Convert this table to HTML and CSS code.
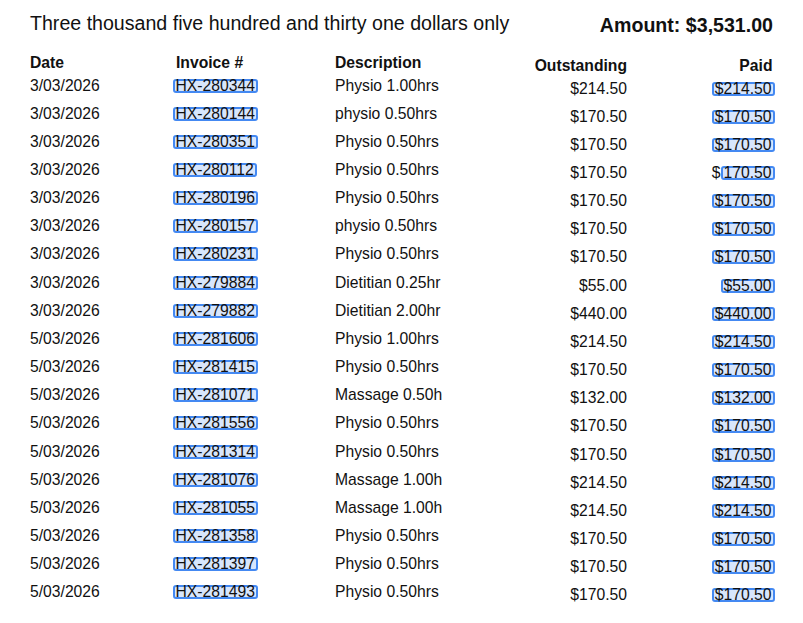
FILE: index.html
```html
<!DOCTYPE html>
<html lang="en">
<head>
<meta charset="utf-8">
<title>Payment allocation</title>
<link rel="stylesheet" href="styles.css">
</head>
<body>
<main class="doc">
  <header class="doc-head">
    <p class="words">Three thousand five hundred and thirty one dollars only</p>
    <p class="amount">Amount: $3,531.00</p>
  </header>
  <section class="ledger">
    <div class="row head">
      <span>Date</span><span>Invoice #</span><span>Description</span><span class="num">Outstanding</span><span class="num paid">Paid</span>
    </div>
    <div class="row"><span>3/03/2026</span><span><span class="hl inv">HX-280344</span></span><span class="desc">Physio 1.00hrs</span><span class="num">$214.50</span><span class="num paid"><span class="hl">$214.50</span></span></div>
    <div class="row"><span>3/03/2026</span><span><span class="hl inv">HX-280144</span></span><span class="desc">physio 0.50hrs</span><span class="num">$170.50</span><span class="num paid"><span class="hl">$170.50</span></span></div>
    <div class="row"><span>3/03/2026</span><span><span class="hl inv">HX-280351</span></span><span class="desc">Physio 0.50hrs</span><span class="num">$170.50</span><span class="num paid"><span class="hl">$170.50</span></span></div>
    <div class="row"><span>3/03/2026</span><span><span class="hl inv">HX-280112</span></span><span class="desc">Physio 0.50hrs</span><span class="num">$170.50</span><span class="num paid">$<span class="hl">170.50</span></span></div>
    <div class="row"><span>3/03/2026</span><span><span class="hl inv">HX-280196</span></span><span class="desc">Physio 0.50hrs</span><span class="num">$170.50</span><span class="num paid"><span class="hl">$170.50</span></span></div>
    <div class="row"><span>3/03/2026</span><span><span class="hl inv">HX-280157</span></span><span class="desc">physio 0.50hrs</span><span class="num">$170.50</span><span class="num paid"><span class="hl">$170.50</span></span></div>
    <div class="row"><span>3/03/2026</span><span><span class="hl inv">HX-280231</span></span><span class="desc">Physio 0.50hrs</span><span class="num">$170.50</span><span class="num paid"><span class="hl">$170.50</span></span></div>
    <div class="row"><span>3/03/2026</span><span><span class="hl inv">HX-279884</span></span><span class="desc">Dietitian 0.25hr</span><span class="num">$55.00</span><span class="num paid"><span class="hl">$55.00</span></span></div>
    <div class="row"><span>3/03/2026</span><span><span class="hl inv">HX-279882</span></span><span class="desc">Dietitian 2.00hr</span><span class="num">$440.00</span><span class="num paid"><span class="hl">$440.00</span></span></div>
    <div class="row"><span>5/03/2026</span><span><span class="hl inv">HX-281606</span></span><span class="desc">Physio 1.00hrs</span><span class="num">$214.50</span><span class="num paid"><span class="hl">$214.50</span></span></div>
    <div class="row"><span>5/03/2026</span><span><span class="hl inv">HX-281415</span></span><span class="desc">Physio 0.50hrs</span><span class="num">$170.50</span><span class="num paid"><span class="hl">$170.50</span></span></div>
    <div class="row"><span>5/03/2026</span><span><span class="hl inv">HX-281071</span></span><span class="desc">Massage 0.50h</span><span class="num">$132.00</span><span class="num paid"><span class="hl">$132.00</span></span></div>
    <div class="row"><span>5/03/2026</span><span><span class="hl inv">HX-281556</span></span><span class="desc">Physio 0.50hrs</span><span class="num">$170.50</span><span class="num paid"><span class="hl">$170.50</span></span></div>
    <div class="row"><span>5/03/2026</span><span><span class="hl inv">HX-281314</span></span><span class="desc">Physio 0.50hrs</span><span class="num">$170.50</span><span class="num paid"><span class="hl">$170.50</span></span></div>
    <div class="row"><span>5/03/2026</span><span><span class="hl inv">HX-281076</span></span><span class="desc">Massage 1.00h</span><span class="num">$214.50</span><span class="num paid"><span class="hl">$214.50</span></span></div>
    <div class="row"><span>5/03/2026</span><span><span class="hl inv">HX-281055</span></span><span class="desc">Massage 1.00h</span><span class="num">$214.50</span><span class="num paid"><span class="hl">$214.50</span></span></div>
    <div class="row"><span>5/03/2026</span><span><span class="hl inv">HX-281358</span></span><span class="desc">Physio 0.50hrs</span><span class="num">$170.50</span><span class="num paid"><span class="hl">$170.50</span></span></div>
    <div class="row"><span>5/03/2026</span><span><span class="hl inv">HX-281397</span></span><span class="desc">Physio 0.50hrs</span><span class="num">$170.50</span><span class="num paid"><span class="hl">$170.50</span></span></div>
    <div class="row"><span>5/03/2026</span><span><span class="hl inv">HX-281493</span></span><span class="desc">Physio 0.50hrs</span><span class="num">$170.50</span><span class="num paid"><span class="hl">$170.50</span></span></div>
  </section>
</main>
</body>
</html>
```
FILE: styles.css
```css
html, body {
  margin: 0;
  background: #ffffff;
}

body {
  color: #111111;
  font-family: "Liberation Sans", Arial, sans-serif;
}

.doc {
  margin-left: 30px;
  width: 745px;
  padding-top: 10.5px;
}

.doc-head {
  display: flex;
  justify-content: space-between;
  align-items: flex-start;
  padding-right: 2px;
  font-size: 19.6px;
  line-height: 24px;
}

.words {
  margin: 0;
}

.amount {
  margin: 0;
  padding-top: 2.5px;
  font-weight: bold;
}

.ledger {
  margin-top: 17px;
}

.row {
  display: grid;
  grid-template-columns: 146px 159px 191px 101px 148px;
  grid-template-rows: 28.17px;
  height: 28.17px;
  font-size: 15.7px;
  line-height: 28.17px;
  white-space: nowrap;
}

.row.head {
  grid-template-rows: 17.5px;
  height: 17.5px;
  line-height: 17.5px;
  font-weight: bold;
}

.num {
  text-align: right;
  padding-top: 3px;
}

.paid {
  padding-right: 0.5px;
}

.head .paid {
  padding-right: 2.5px;
}

.hl {
  display: inline-block;
  line-height: 10px;
  border: 2px solid #4489f2;
  border-radius: 3px;
  background: #d8e6fc;
  padding: 0 1px 0 1px;
}

.inv {
  margin-left: -3.5px;
  padding-right: 1.5px;
}
```
